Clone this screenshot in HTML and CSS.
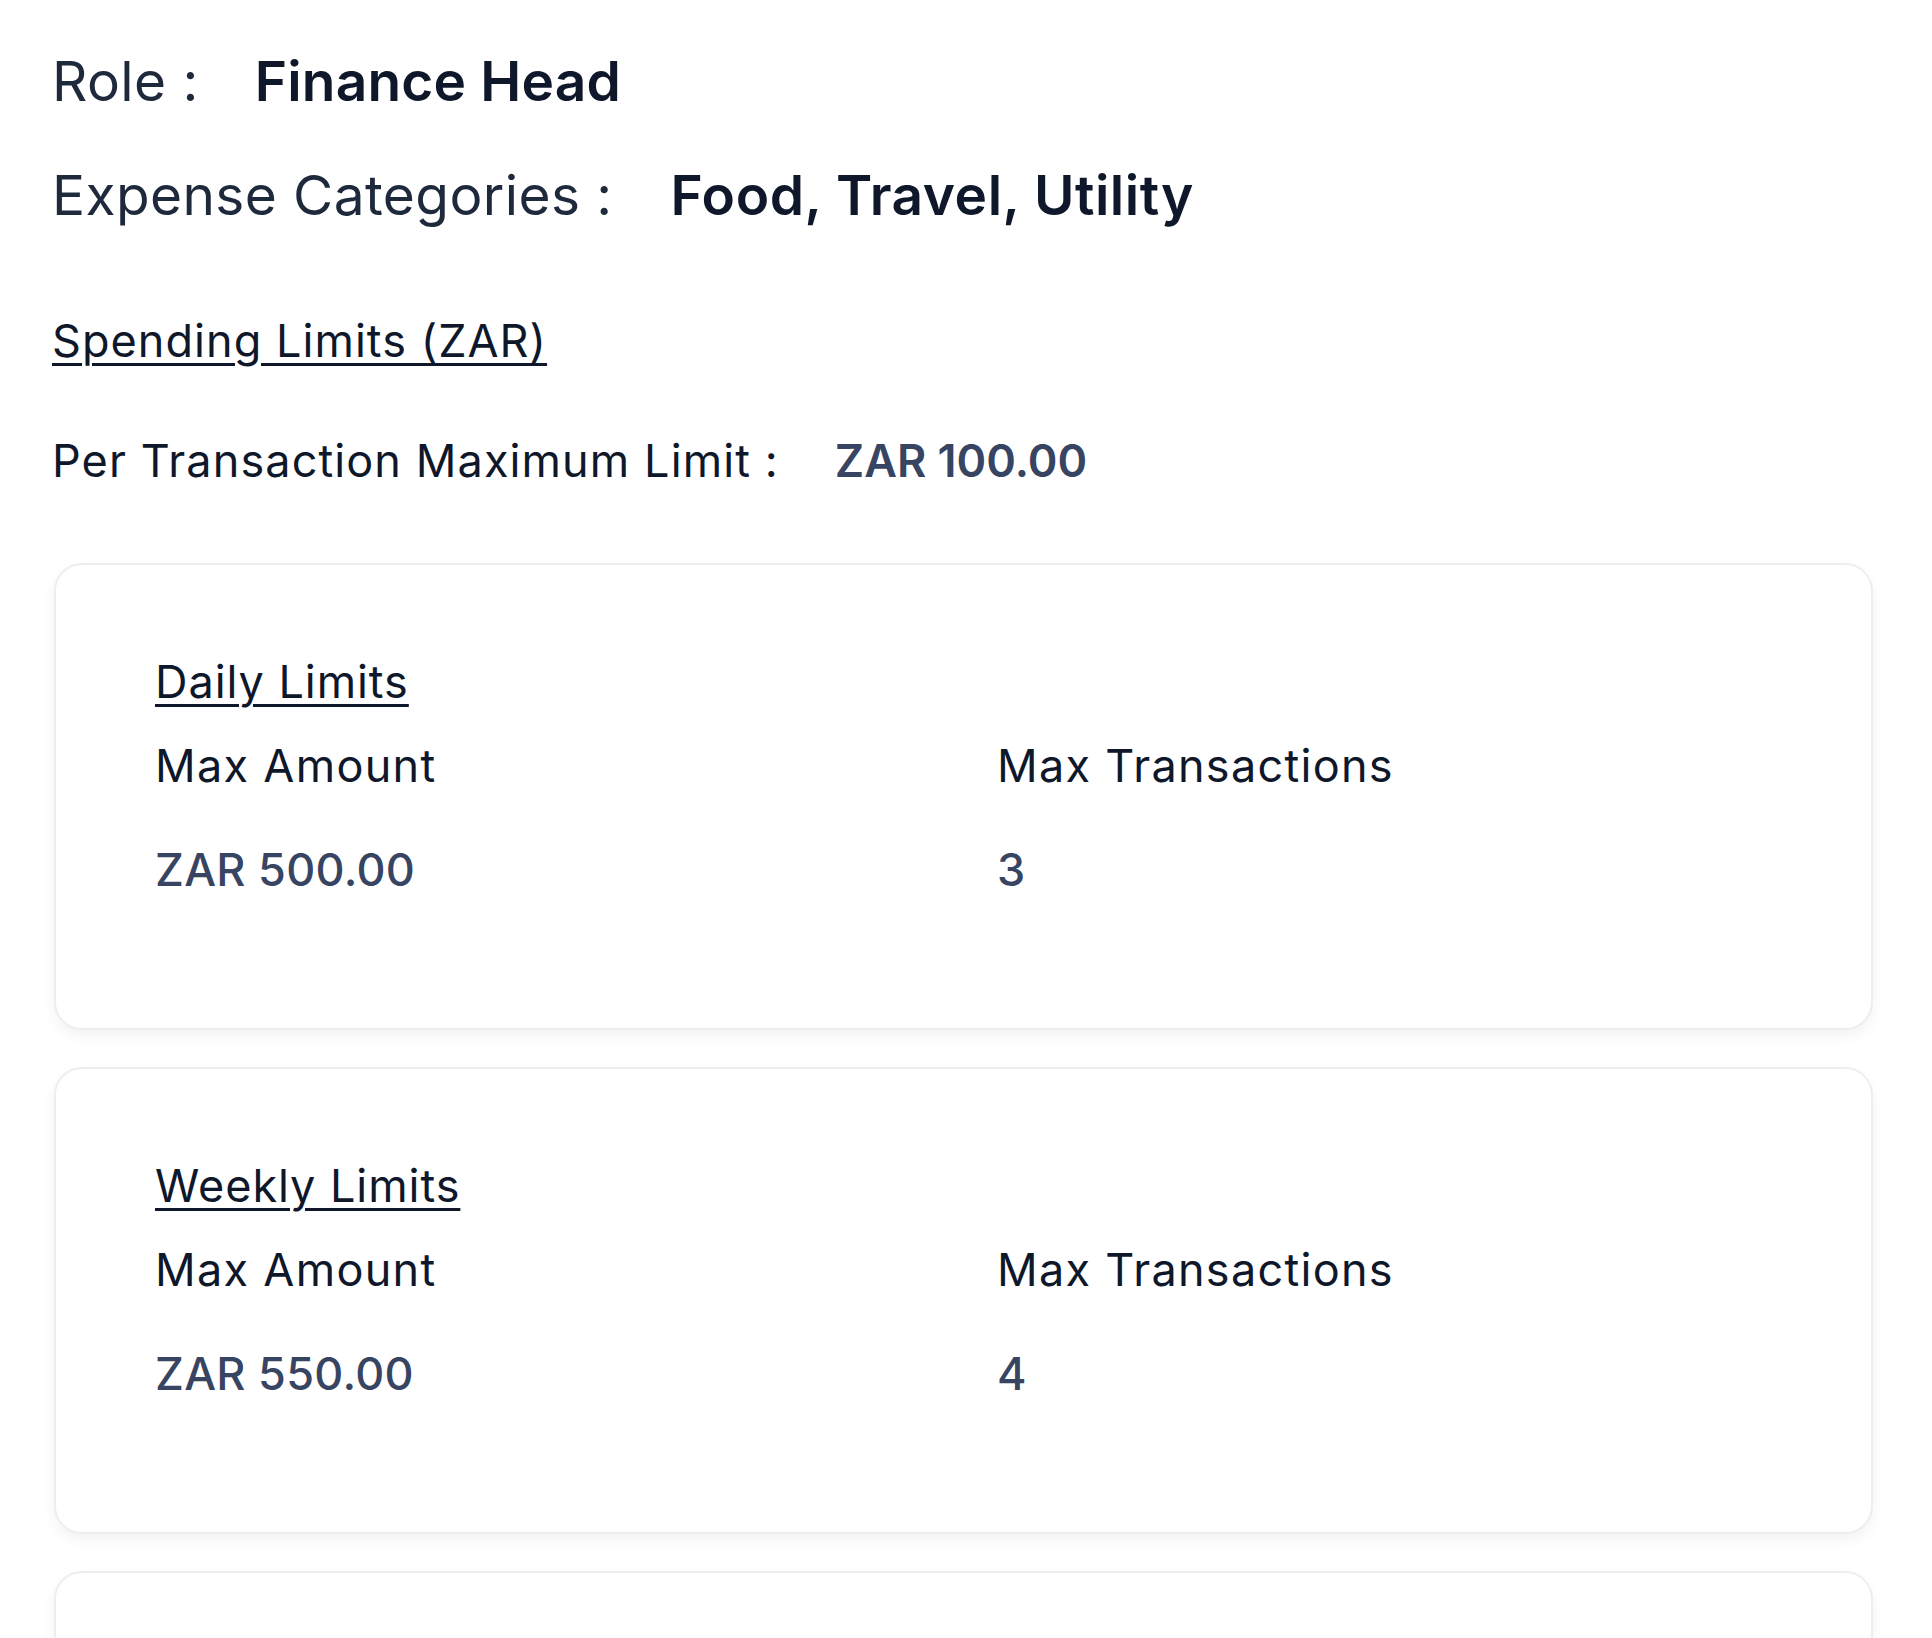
FILE: index.html
```html
<!DOCTYPE html>
<html lang="en">
<head>
<meta charset="utf-8">
<title>Role Details</title>
<link rel="stylesheet" href="styles.css">
</head>
<body>
<div class="pager">
  <main class="page">
    <div class="info-row info-role">
      <span class="info-label">Role :</span>
      <span class="info-value">Finance Head</span>
    </div>
    <div class="info-row info-cats">
      <span class="info-label">Expense Categories :</span>
      <span class="info-value">Food, Travel, Utility</span>
    </div>

    <h2 class="section-title">Spending Limits (ZAR)</h2>

    <div class="per-row">
      <span class="per-label">Per Transaction Maximum Limit :</span>
      <span class="per-value">ZAR 100.00</span>
    </div>

    <div class="cards">
      <section class="limit-card">
        <h3 class="limit-title">Daily Limits</h3>
        <div class="limit-grid">
          <div class="limit-label">Max Amount</div>
          <div class="limit-label">Max Transactions</div>
          <div class="limit-value">ZAR 500.00</div>
          <div class="limit-value">3</div>
        </div>
      </section>
      <section class="limit-card">
        <h3 class="limit-title">Weekly Limits</h3>
        <div class="limit-grid">
          <div class="limit-label">Max Amount</div>
          <div class="limit-label">Max Transactions</div>
          <div class="limit-value">ZAR 550.00</div>
          <div class="limit-value">4</div>
        </div>
      </section>
      <section class="limit-card">
        <h3 class="limit-title">Monthly Limits</h3>
        <div class="limit-grid">
          <div class="limit-label">Max Amount</div>
          <div class="limit-label">Max Transactions</div>
          <div class="limit-value">ZAR 600.00</div>
          <div class="limit-value">5</div>
        </div>
      </section>
    </div>
  </main>
  <aside class="page page-next">
    <div class="next-card"></div>
  </aside>
</div>
</body>
</html>
```

FILE: styles.css
```css
* { box-sizing: border-box; }

html, body {
  margin: 0;
  padding: 0;
  background: #ffffff;
  overflow: hidden;
}

body {
  font-family: "Inter", "Noto Sans", "Liberation Sans", sans-serif;
  color: #0f172a;
}

.pager {
  display: flex;
  gap: 57px;
  width: 4000px;
}

.page {
  width: 1873px;
  flex: none;
  padding: 48px 0 0 52px;
}

.info-row {
  display: flex;
  align-items: baseline;
  gap: 56px;
  font-size: 55px;
  line-height: 66px;
  letter-spacing: 0.4px;
}

.info-cats {
  margin-top: 48px;
  gap: 58px;
}

.info-label {
  color: #1e293b;
  font-weight: 400;
}

.info-value {
  color: #0f172a;
  font-weight: 600;
  letter-spacing: 0.2px;
}

.info-cats .info-value {
  letter-spacing: 0.55px;
}

.section-title {
  margin: 86px 0 0;
  font-size: 45px;
  line-height: 54px;
  font-weight: 400;
  letter-spacing: 1.05px;
  color: #0f172a;
  text-decoration: underline;
  text-decoration-thickness: 3px;
  text-underline-offset: 6px;
}

.per-row {
  margin-top: 66px;
  display: flex;
  align-items: baseline;
  gap: 56px;
  font-size: 45px;
  line-height: 54px;
}

.per-label {
  color: #0f172a;
  letter-spacing: 1.1px;
}

.per-value {
  color: #374462;
  font-weight: 600;
}

.cards {
  margin: 75px 0 0 2px;
  display: flex;
  flex-direction: column;
  gap: 37px;
}

.limit-card {
  height: 467px;
  border: 2px solid #eeeef2;
  border-radius: 28px;
  background: #ffffff;
  box-shadow: 0 6px 14px rgba(15, 23, 42, 0.05);
  padding: 90px 100px 0 99px;
}

.limit-title {
  margin: 0;
  font-size: 45px;
  line-height: 54px;
  font-weight: 400;
  letter-spacing: 0.95px;
  color: #0f172a;
  text-decoration: underline;
  text-decoration-thickness: 3px;
  text-underline-offset: 6px;
}

.limit-grid {
  margin-top: 30px;
  display: grid;
  grid-template-columns: 842px 1fr;
  row-gap: 50px;
}

.limit-label {
  font-size: 45px;
  line-height: 54px;
  letter-spacing: 1.3px;
  color: #0f172a;
}

.limit-value {
  font-size: 45px;
  line-height: 54px;
  font-weight: 500;
  letter-spacing: 0.3px;
  color: #374462;
}

.page-next {
  width: 400px;
  padding-top: 575px;
}

.next-card {
  height: 900px;
  border: 2px solid #eeeef2;
  border-radius: 28px;
}
```
